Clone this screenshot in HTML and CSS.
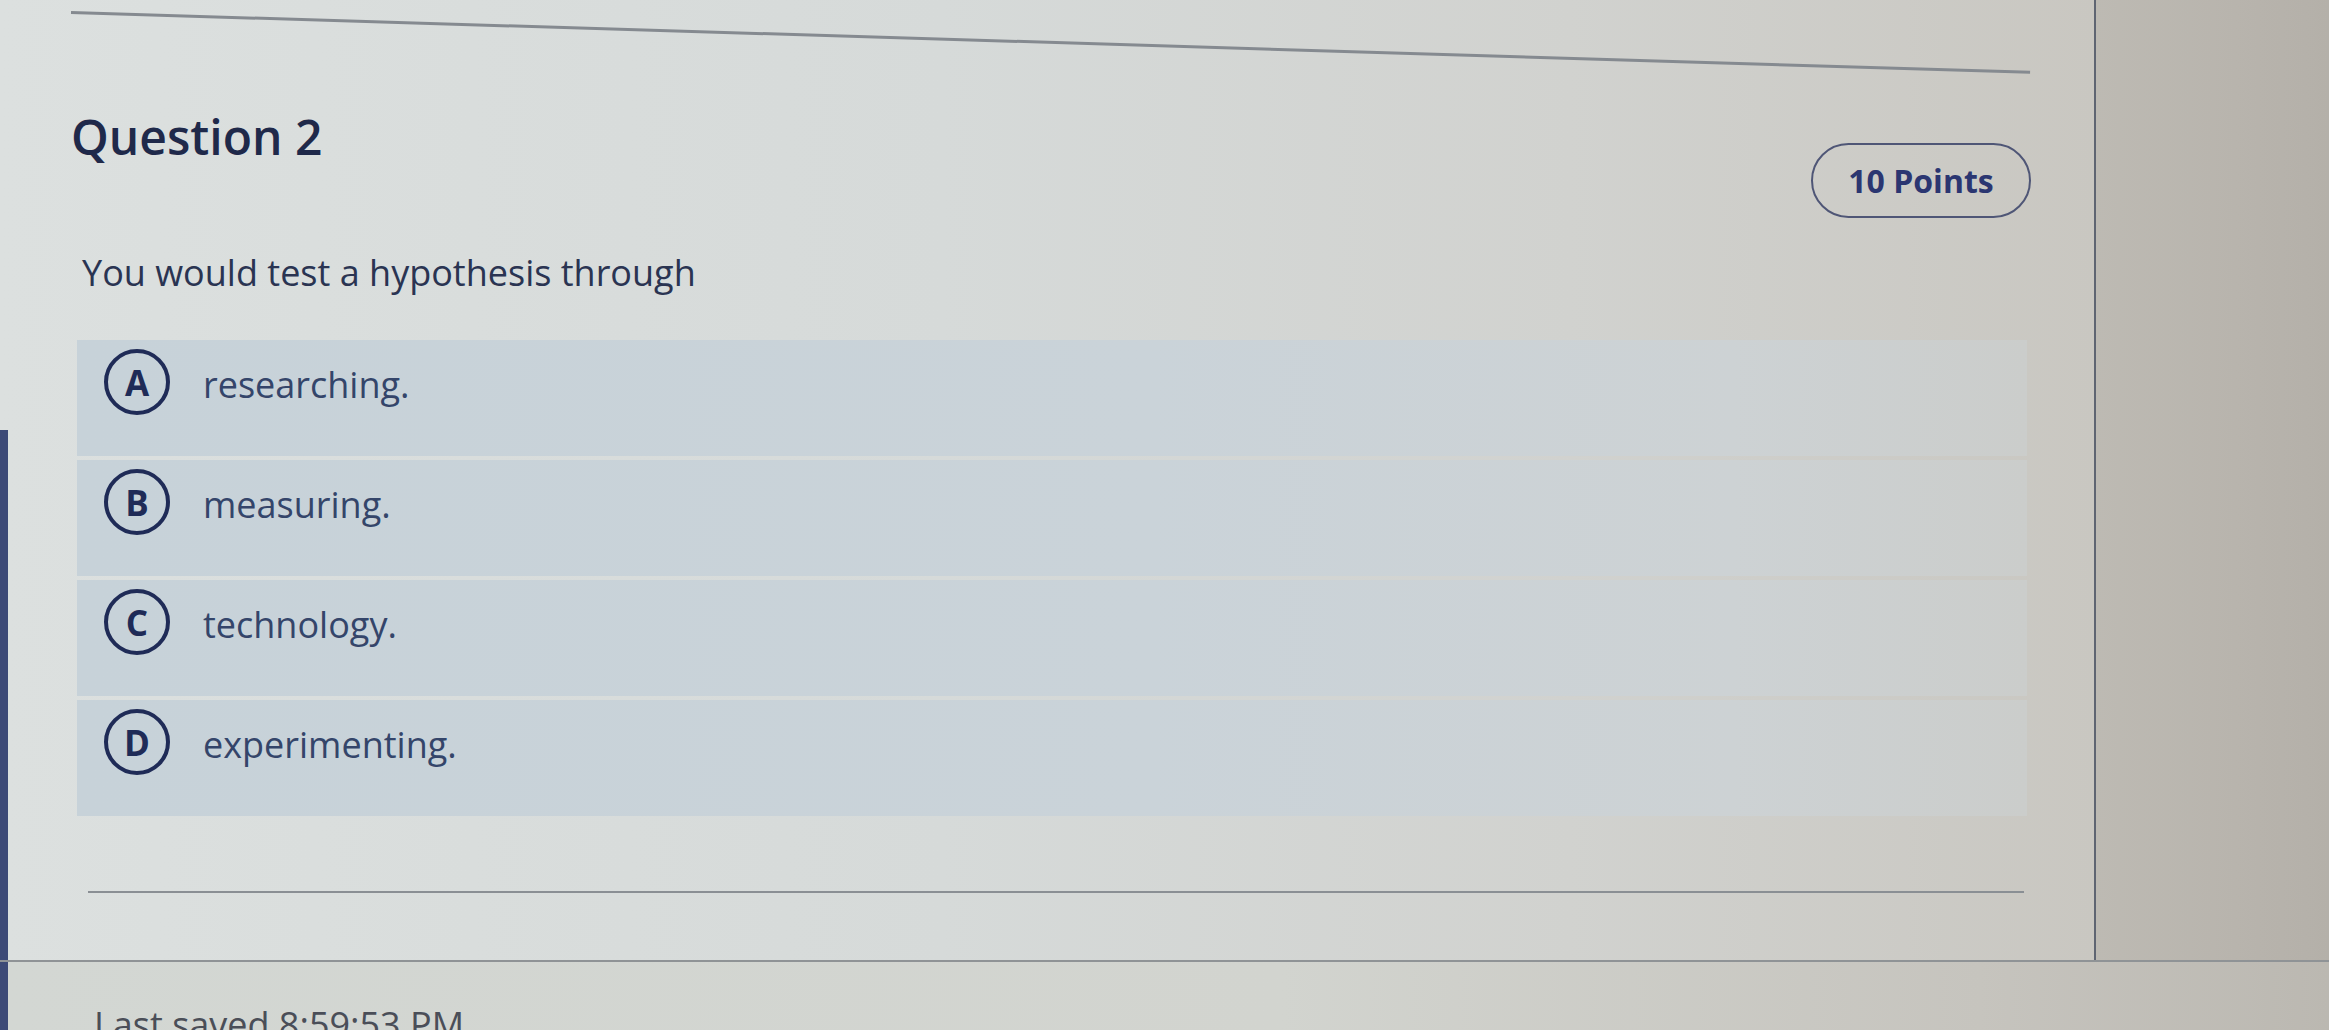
FILE: index.html
```html
<!DOCTYPE html>
<html lang="en">
<head>
<meta charset="utf-8">
<title>Question 2</title>
<link rel="stylesheet" href="styles.css">
</head>
<body>
<div class="page">
  <div class="main">
    <section class="card">
      <div class="top-rule"></div>
      <div class="q-head">
        <h2 class="q-title">Question 2</h2>
        <span class="points">10 Points</span>
      </div>
      <p class="q-text">You would test a hypothesis through</p>
      <div class="options">
        <div class="option"><span class="letter">A</span><span class="opt-text">researching.</span></div>
        <div class="option"><span class="letter">B</span><span class="opt-text">measuring.</span></div>
        <div class="option"><span class="letter">C</span><span class="opt-text">technology.</span></div>
        <div class="option"><span class="letter">D</span><span class="opt-text">experimenting.</span></div>
      </div>
      <div class="bottom-rule"></div>
    </section>
    <aside class="side"></aside>
  </div>
  <footer class="footer">Last saved 8:59:53 PM</footer>
</div>
</body>
</html>
```
FILE: styles.css
```css
* { box-sizing: border-box; }

html, body {
  margin: 0;
  padding: 0;
  width: 2329px;
  height: 1030px;
  overflow: hidden;
}

body {
  font-family: "Open Sans", "Noto Sans", "Liberation Sans", sans-serif;
  color: #26304f;
  background: #d4d7d3;
}

.page {
  display: flex;
  flex-direction: column;
  height: 1030px;
}

.main {
  display: flex;
  height: 960px;
}

.card {
  width: 2096px;
  height: 960px;
  padding: 0 63px 0 71px;
  border-right: 2px solid #5f6572;
  background:
    linear-gradient(#3d4a77, #3d4a77) 0 430px / 8px 530px no-repeat,
    linear-gradient(90deg, #dce0df 0%, #d6dad9 45%, #d1d2cf 75%, #c9c7c1 100%);
  display: flex;
  flex-direction: column;
}

.top-rule {
  width: 1960px;
  height: 3px;
  margin-top: 11px;
  background: #858a90;
  transform: rotate(1.75deg);
  transform-origin: 0 50%;
  flex: none;
}

.q-head {
  display: flex;
  justify-content: space-between;
  align-items: flex-start;
  margin-top: 90px;
  height: 114px;
  flex: none;
}

.q-title {
  margin: 0;
  font-size: 48px;
  font-weight: 600;
  line-height: 1.362;
  color: #1f294a;
}

.points {
  margin-top: 39px;
  width: 220px;
  height: 75px;
  border: 2.5px solid #4f5676;
  border-radius: 38px;
  display: flex;
  align-items: center;
  justify-content: center;
  font-size: 32px;
  font-weight: 700;
  color: #2b3671;
}

.q-text {
  margin: 30px 0 0 11px;
  font-size: 36px;
  line-height: 1.362;
  color: #2a3452;
  flex: none;
}

.options {
  margin: 43px 4px 0 6px;
  display: flex;
  flex-direction: column;
  gap: 4px;
  flex: none;
}

.option {
  height: 116px;
  display: flex;
  align-items: flex-start;
  gap: 33px;
  padding: 9px 0 0 27px;
  background: linear-gradient(90deg, #c7d2d9 0%, #cad3d9 55%, #cdd2d4 85%, #cbcdcb 100%);
}

.letter {
  width: 66px;
  height: 66px;
  flex: none;
  border: 4px solid #1f2b57;
  border-radius: 50%;
  display: flex;
  align-items: center;
  justify-content: center;
  font-size: 35px;
  font-weight: 700;
  color: #1f2b57;
}

.opt-text {
  font-size: 36px;
  line-height: 66px;
  color: #34456a;
  padding-top: 3px;
}

.bottom-rule {
  margin: 75px 7px 0 17px;
  height: 2px;
  background: #8a8f94;
  flex: none;
}

.side {
  flex: 1;
  background: linear-gradient(90deg, #bdbab3 0%, #b8b4ad 60%, #b4b0a9 100%);
}

.footer {
  flex: 1;
  border-top: 2px solid #8f9396;
  padding: 38px 0 0 94px;
  font-size: 36px;
  line-height: 1.362;
  color: #4a4e58;
  background:
    linear-gradient(#3d4a77, #3d4a77) 0 0 / 8px 100% no-repeat,
    linear-gradient(90deg, #d3d7d3 0%, #d2d4cf 55%, #c6c4be 85%, #bbb8b1 100%);
  white-space: nowrap;
}
```
